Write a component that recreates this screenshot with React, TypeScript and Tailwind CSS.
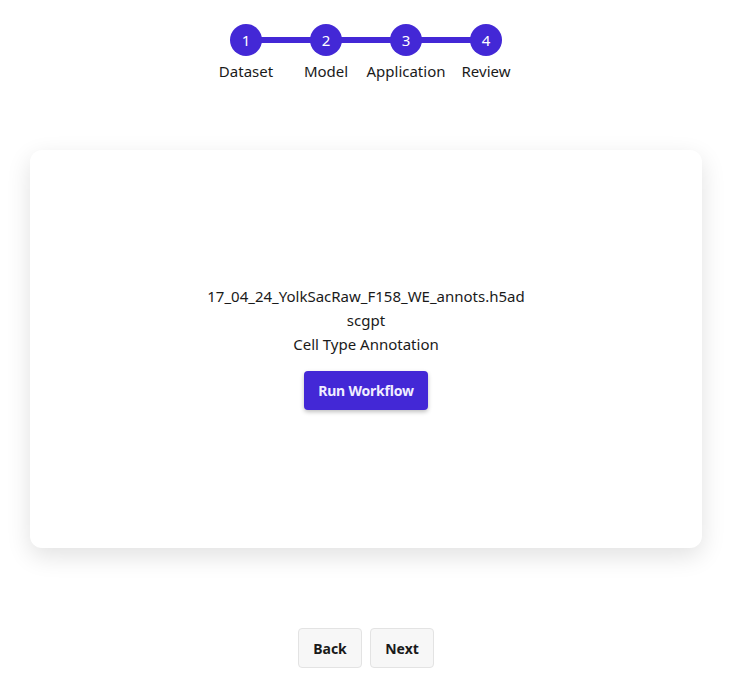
const steps = ['Dataset', 'Model', 'Application', 'Review'];

function Stepper() {
  return (
    <div className="flex justify-center pt-6">
      <div className="relative flex">
        <div className="absolute left-10 right-10 top-[13px] h-[6px] bg-[#4328d6]" />
        {steps.map((label, i) => (
          <div key={label} className="relative flex w-20 flex-col items-center">
            <div className="flex h-8 w-8 items-center justify-center rounded-full bg-[#4328d6] text-[15px] text-white">
              {i + 1}
            </div>
            <div className="mt-[5px] text-[15px] leading-5 text-[#1a1a1a]">{label}</div>
          </div>
        ))}
      </div>
    </div>
  );
}

export default function App() {
  return (
    <div
      className="min-h-[694px] w-[732px] bg-white"
      style={{ fontFamily: '"Noto Sans", "Open Sans", sans-serif' }}
    >
      <Stepper />
      <div className="mx-[30px] mt-[69px] flex h-[398px] flex-col items-center justify-center rounded-xl bg-white pb-1 shadow-[0_8px_24px_rgba(0,0,0,0.12)]">
        <div className="text-[15px] leading-6 text-[#1a1a1a]">17_04_24_YolkSacRaw_F158_WE_annots.h5ad</div>
        <div className="text-[15px] leading-6 text-[#1a1a1a]">scgpt</div>
        <div className="text-[15px] leading-6 text-[#1a1a1a]">Cell Type Annotation</div>
        <button className="mt-[15px] h-[39px] w-[124px] rounded bg-[#4328d6] text-[14px] font-bold tracking-[-0.2px] text-[#f0eeff] shadow-[0_2px_4px_rgba(0,0,0,0.25)]">
          Run Workflow
        </button>
      </div>
      <div className="mt-[80px] flex justify-center gap-2">
        <button className="h-10 w-16 rounded border border-[#e3e3e3] bg-[#f7f7f7] text-[14px] font-bold text-[#1a1a1a]">
          Back
        </button>
        <button className="h-10 w-16 rounded border border-[#e3e3e3] bg-[#f7f7f7] text-[14px] font-bold text-[#1a1a1a]">
          Next
        </button>
      </div>
    </div>
  );
}
